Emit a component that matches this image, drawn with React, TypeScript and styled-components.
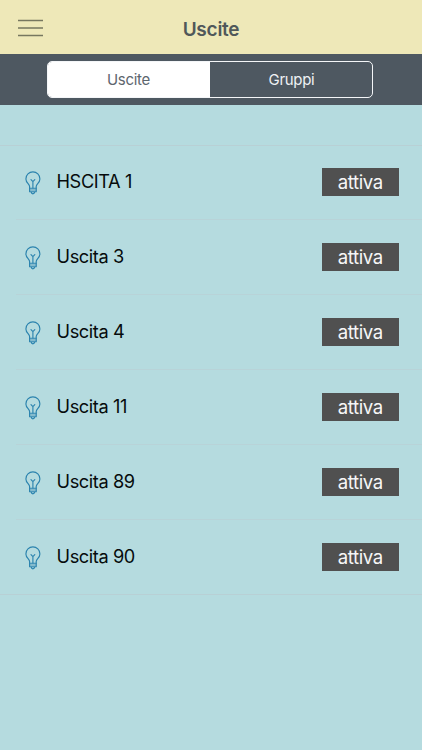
import React from "react";
import styled, { createGlobalStyle } from "styled-components";

const GlobalStyle = createGlobalStyle`
  * { box-sizing: border-box; }
  body { margin: 0; background: #b5dbdf; font-family: Inter, "Liberation Sans", sans-serif; }
`;

const Screen = styled.div`
  display: flex;
  flex-direction: column;
  min-height: 750px;
  background: #b5dbdf;
`;

const NavBar = styled.header`
  display: grid;
  grid-template-columns: 62px 1fr 62px;
  align-items: center;
  height: 54px;
  background: #eee8b8;
`;

const MenuButton = styled.button`
  display: flex;
  padding: 1px 0 0 18px;
  border: 0;
  background: none;
`;

const Title = styled.h1`
  margin: 5px 0 0;
  text-align: center;
  font-size: 19px;
  line-height: 24px;
  font-weight: 600;
  letter-spacing: -0.25px;
  color: #50585a;
`;

const SegmentBar = styled.div`
  display: flex;
  height: 51px;
  padding: 7px 49px 7px 47px;
  background: #4e5861;
`;

const Segments = styled.div`
  display: grid;
  grid-template-columns: 1fr 1fr;
  flex: 1;
  border: 1.5px solid #f4f6f8;
  border-radius: 5px;
  overflow: hidden;
`;

const Segment = styled.button<{ $active?: boolean }>`
  border: 0;
  padding: ${(p) => (p.$active ? "0 1px 0 0" : "0 0 0 1px")};
  font: 400 15px Inter, sans-serif;
  letter-spacing: -0.3px;
  color: ${(p) => (p.$active ? "#5d666e" : "#eef1f4")};
  background: ${(p) => (p.$active ? "#fff" : "transparent")};
`;

const List = styled.ul`
  list-style: none;
  margin: 40px 0 0;
  padding: 0;
  border-top: 1px solid #b8d0d5;
  border-bottom: 1px solid #b8d0d5;
`;

const Row = styled.li`
  display: flex;
  align-items: center;
  height: 75px;
  margin-left: 16px;
  padding: 0 23px 0 9px;
  border-bottom: 1px solid #b8d3d8;

  &:first-child {
    height: 74px;
    padding-bottom: 1px;
  }

  &:last-child {
    height: 74px;
    border-bottom: 0;
  }
`;

const Name = styled.span`
  flex: 1;
  margin: 0 0 2px 15.5px;
  font-size: 18.2px;
  line-height: 24px;
  letter-spacing: -0.4px;
  color: #060b0c;
`;

const Status = styled.span`
  width: 77.5px;
  height: 28px;
  line-height: 29px;
  text-align: center;
  font-size: 18.6px;
  letter-spacing: -0.4px;
  color: #f6f6f6;
  background: #505050;
`;

const BulbIcon = styled.svg`
  display: block;
  flex: none;
  margin-top: 1px;
  fill: none;
  stroke: #2b83ae;
  stroke-width: 1.15;
  stroke-linecap: round;
  stroke-linejoin: round;
`;

const Bulb = () => (
  <BulbIcon width="16" height="24" viewBox="0 0 16 24">
    <path d="M4.600 17.200V15.600C4.600 13.100 0.900 12 0.900 7.900a7 7 0 0 1 14 0C14.900 12 11.200 13.100 11.200 15.600V17.200Z" />
    <path d="M4.600 17.200V20.700H11.200V17.200M6 20.900Q6.500 22.800 7.900 22.800T9.800 20.900" />
    <path d="M4.600 19H11.200" strokeWidth="0.7" />
    <path d="M7.900 17V10.600M6 8.700L7.900 10.600L9.800 8.700" />
  </BulbIcon>
);

const outputs = ["HSCITA 1", "Uscita 3", "Uscita 4", "Uscita 11", "Uscita 89", "Uscita 90"];

export default function App() {
  return (
    <Screen>
      <GlobalStyle />
      <NavBar>
        <MenuButton aria-label="Menu">
          <svg width="26" height="18" fill="none" stroke="#77775f" strokeWidth="1.3">
            <path d="M0 1.500H25M0 9H25M0 16.500H25" />
          </svg>
        </MenuButton>
        <Title>Uscite</Title>
      </NavBar>
      <SegmentBar>
        <Segments>
          <Segment $active>Uscite</Segment>
          <Segment>Gruppi</Segment>
        </Segments>
      </SegmentBar>
      <List>
        {outputs.map((name) => (
          <Row key={name}>
            <Bulb />
            <Name>{name}</Name>
            <Status>attiva</Status>
          </Row>
        ))}
      </List>
    </Screen>
  );
}
